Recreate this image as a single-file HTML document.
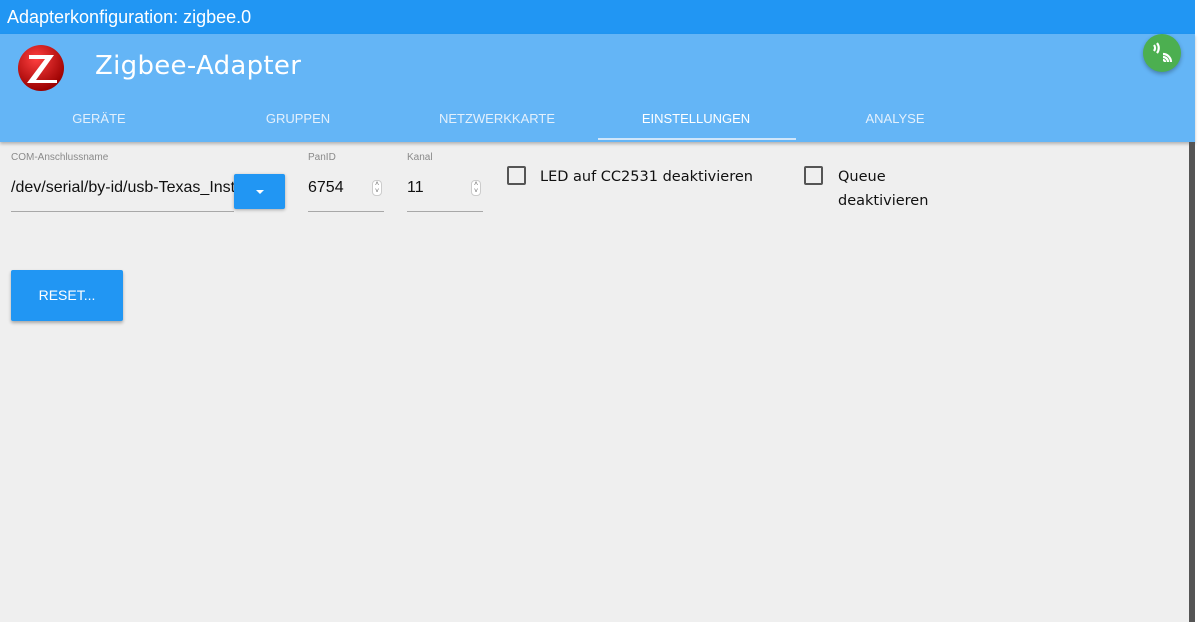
<!DOCTYPE html>
<html><head><style>
*{margin:0;padding:0;box-sizing:border-box}
body{width:1200px;height:622px;background:#fff;font-family:"Liberation Sans",sans-serif;position:relative;overflow:hidden}
.main{position:absolute;left:0;top:0;width:1195px;height:622px;background:#efefef}
.top{position:absolute;left:0;top:0;width:1195px;height:34px;background:#2196f3;color:#fff;font-size:18px;line-height:34px;padding-left:7px}
.hdr{position:absolute;left:0;top:34px;width:1195px;height:108px;background:#64b5f6;box-shadow:0 2px 3px rgba(0,0,0,.25)}
.title{position:absolute;left:95px;top:17px;color:#fff;font-size:26px;font-family:"DejaVu Sans",sans-serif;letter-spacing:.3px}
.tab{position:absolute;top:77px;color:#e3f0fc;font-size:13px;text-align:center;width:198px}
.tab.a{color:#fff}
.ul{position:absolute;left:598px;top:104px;width:198px;height:2px;background:#cfe6fb}
.fab{position:absolute;left:1143px;top:34px;width:38px;height:38px;border-radius:50%;background:#4caf50;box-shadow:0 2px 4px rgba(0,0,0,.3)}
.lbl{position:absolute;top:152px;font-size:10px;color:#8a8a8a}
.inp{position:absolute;top:179px;font-size:16px;color:#111}
.line{position:absolute;top:211px;height:1px;background:#a8a8a8}
.dd{position:absolute;left:234px;top:174px;width:51px;height:35px;background:#2196f3;border-radius:2px;box-shadow:0 1px 3px rgba(0,0,0,.3)}
.dd:after{content:"";position:absolute;left:22px;top:16px;border-left:4px solid transparent;border-right:4px solid transparent;border-top:4px solid #fff}
.spin{position:absolute;top:180px;width:10px;height:16px;border:1px solid #ccc;border-radius:4px;background:#fff;font-size:7px;line-height:7px;text-align:center;color:#666}
.cb{position:absolute;top:166px;width:19px;height:19px;border:2px solid #555;border-radius:2px}
.ct{position:absolute;font-family:"DejaVu Sans",sans-serif;font-size:14.5px;color:#111;line-height:24px}
.btn{position:absolute;left:11px;top:270px;width:112px;height:51px;background:#2196f3;border-radius:2px;box-shadow:0 2px 3px rgba(0,0,0,.3);color:#fff;font-size:14px;text-align:center;line-height:51px}
.sb{position:absolute;left:1189px;top:142px;width:6px;height:480px;background:#555}
</style></head><body>
<div class="main">
<div class="top">Adapterkonfiguration: zigbee.0</div>
<div class="hdr">
<svg style="position:absolute;left:17px;top:10px" width="48" height="48" viewBox="0 0 48 48"><defs><radialGradient id="g" cx=".4" cy=".3" r=".7"><stop offset="0" stop-color="#ff4040"/><stop offset="1" stop-color="#9a0000"/></radialGradient></defs><circle cx="24" cy="24" r="23" fill="url(#g)"/><path d="M12 11H37L19 36H40V39H10L28 15H12Z" fill="#fff"/></svg>
<div class="title">Zigbee-Adapter</div>
<div class="tab" style="left:0">GERÄTE</div>
<div class="tab" style="left:199px">GRUPPEN</div>
<div class="tab" style="left:398px">NETZWERKKARTE</div>
<div class="tab a" style="left:597px">EINSTELLUNGEN</div>
<div class="tab" style="left:796px">ANALYSE</div>
<div class="ul"></div>
</div>
<div class="fab"><svg width="38" height="38" viewBox="0 0 38 38" fill="none" stroke="#fff" stroke-width="2.2"><path d="M11 11a5 5 0 0 1 0 6M14 9a8 8 0 0 1 0 10"/><path d="M28 28a8 8 0 0 0-8-8M25 28a5 5 0 0 0-5-5M22 28a2 2 0 0 0-2-2"/></svg></div>
<div class="lbl" style="left:11px">COM-Anschlussname</div>
<div class="lbl" style="left:308px">PanID</div>
<div class="lbl" style="left:407px">Kanal</div>
<div class="inp" style="left:11px;width:223px;overflow:hidden;white-space:nowrap">/dev/serial/by-id/usb-Texas_Instruments</div>
<div class="line" style="left:11px;width:223px"></div>
<div class="dd"></div>
<div class="inp" style="left:308px">6754</div>
<div class="spin" style="left:372px">˄<br>˅</div>
<div class="line" style="left:308px;width:76px"></div>
<div class="inp" style="left:407px">11</div>
<div class="spin" style="left:471px">˄<br>˅</div>
<div class="line" style="left:407px;width:76px"></div>
<div class="cb" style="left:507px"></div>
<div class="ct" style="left:540px;top:165px">LED auf CC2531 deaktivieren</div>
<div class="cb" style="left:804px"></div>
<div class="ct" style="left:838px;top:165px">Queue<br>deaktivieren</div>
<div class="btn">RESET...</div>
<div class="sb"></div>
</div>
</body></html>
